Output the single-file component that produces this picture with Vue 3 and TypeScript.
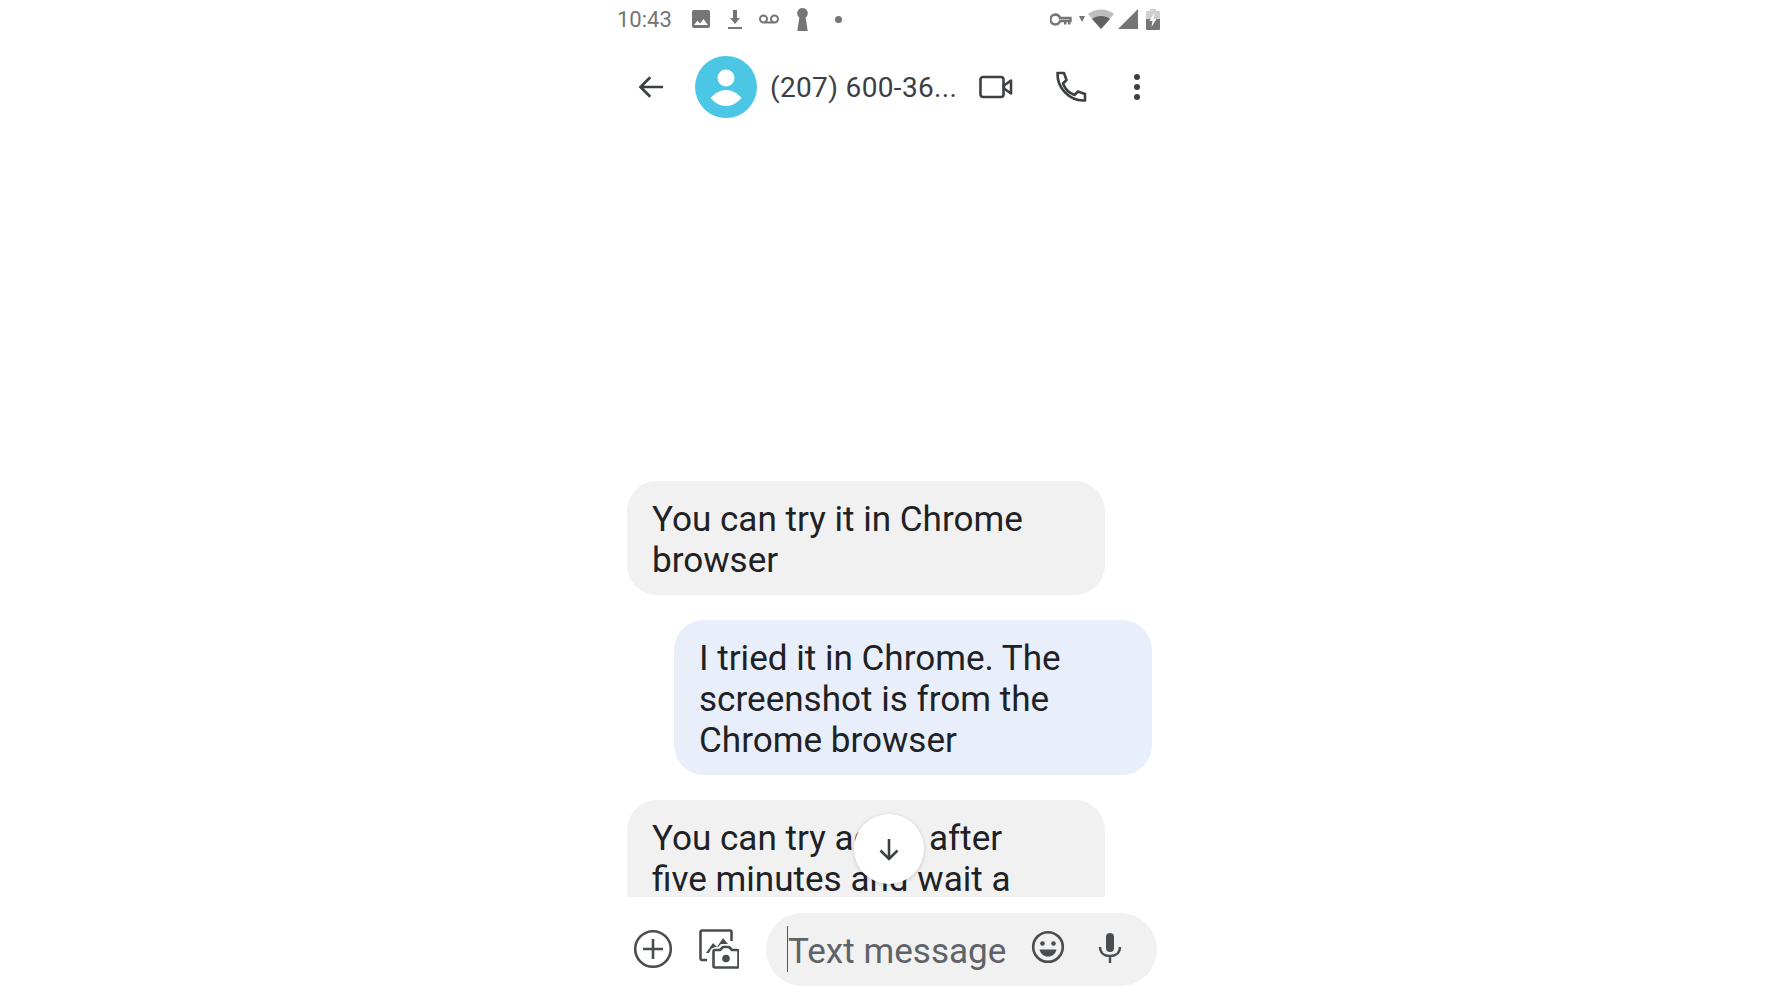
<script setup lang="ts">
interface Message { id: number; side: 'in' | 'out'; lines: string[] }
const messages: Message[] = [
  { id: 1, side: 'in', lines: ['You can try it in Chrome', 'browser'] },
  { id: 2, side: 'out', lines: ['I tried it in Chrome. The', 'screenshot is from the', 'Chrome browser'] },
  { id: 3, side: 'in', lines: ['You can try again after', 'five minutes and wait a'] },
]
</script>

<template>
  <div class="page">
    <div class="phone">
      <div class="status">
        <span class="time">10:43</span>
        <svg class="s1" width="24" height="24" viewBox="0 0 24 24"><path fill="#757575" d="M21 19V5a2 2 0 0 0-2-2H5a2 2 0 0 0-2 2v14a2 2 0 0 0 2 2h14a2 2 0 0 0 2-2zM8.500 13.500l2.500 3 3.500-4.500 4.500 6H5l3.500-4.500z"/></svg>
        <svg class="s2" width="24" height="26" viewBox="0 0 24 24"><path fill="#757575" d="M17 11h-3V3h-4v8H7l5 6 5-6zM5 20v2h14v-2H5z"/></svg>
        <svg class="s3" width="26" height="24" viewBox="0 0 24 24"><path fill="none" stroke="#757575" stroke-width="2" d="M6.500 8.500a3.500 3.500 0 1 0 0 7h11a3.500 3.500 0 1 0 0-7 3.500 3.500 0 0 0 0 7M6.500 8.500a3.500 3.500 0 0 1 0 7"/></svg>
        <svg class="s4" width="17" height="23" viewBox="0 0 16 22"><path fill="#757575" d="M8 0a5 5 0 0 1 3 9l2 13H3L5 9A5 5 0 0 1 8 0z"/></svg>
        <span class="dot"></span>
        <span class="grow"></span>
        <svg class="r1" width="22" height="15" viewBox="0 0 22 14"><path fill="none" stroke="#757575" stroke-width="2.400" d="M5.500 2a5 5 0 0 0 0 10A5 5 0 0 0 10 8.500h10.500V5.500H10A5 5 0 0 0 5.500 2z"/><path fill="#757575" d="M14 8h2.500v4H14zM18 8h2.500v4H18z"/></svg>
        <svg class="r2" width="8" height="8" viewBox="0 0 8 8"><path fill="#757575" d="M1 1h6L4 7z"/></svg>
        <svg class="r3" width="26" height="20" viewBox="0 0 26 20"><path fill="#bdbdbd" d="M0 5C7-1 19-1 26 5l-13 15z"/><path fill="#616161" d="M4 10c5-4 13-4 18 0l-9 10z"/></svg>
        <svg class="r4" width="20" height="20" viewBox="0 0 20 20"><path fill="#757575" d="M20 0v20H0z"/></svg>
        <svg class="r5" width="14" height="21" viewBox="0 0 14 21"><path fill="#cfcfcf" d="M4 2V0h6v2h3a1 1 0 0 1 1 1v17a1 1 0 0 1-1 1H1a1 1 0 0 1-1-1V3a1 1 0 0 1 1-1z"/><path fill="#757575" d="M0 10h14v10a1 1 0 0 1-1 1H1a1 1 0 0 1-1-1z"/><path fill="#fff" d="M8.500 4L3.500 12h3l-1 6 5-8h-3z"/></svg>
      </div>

      <header class="toolbar">
        <svg class="back" width="36" height="36" viewBox="0 0 24 24"><path fill="none" stroke="#3c4043" stroke-width="1.800" d="M20 12H5M11.500 5.500L5 12l6.500 6.500"/></svg>
        <div class="avatar">
          <svg width="62" height="62" viewBox="0 0 62 62"><circle cx="31" cy="22" r="8.500" fill="#fff"/><path fill="#fff" d="M15.500 42C20 37 25 34 31 34S42 37 46.500 42C42 47 37 50 31 50S20 47 15.500 42z"/></svg>
        </div>
        <span class="number">(207) 600-36...</span>
        <svg class="video" width="34" height="24" viewBox="0 0 34 24"><rect x="1.500" y="2" width="23" height="20" rx="2.500" fill="none" stroke="#3c4043" stroke-width="2.600"/><path fill="none" stroke="#3c4043" stroke-width="2.600" stroke-linejoin="round" d="M25 10.500L32 5.500v13l-7-5z"/></svg>
        <svg class="call" width="32" height="32" viewBox="0 0 32 32"><path fill="none" stroke="#3c4043" stroke-width="2.600" stroke-linejoin="round" d="M2.500 2h6.500l2.500 7-3.500 3.500C10 18 14 22 19.500 24l3.500-3.500 7 2.500v6.500c-15 1-28-12-27.500-27.500z"/></svg>
        <svg class="more" width="10" height="28" viewBox="0 0 10 28"><circle cx="5" cy="4" r="3" fill="#3c4043"/><circle cx="5" cy="14" r="3" fill="#3c4043"/><circle cx="5" cy="24" r="3" fill="#3c4043"/></svg>
      </header>

      <main class="thread">
        <div v-for="m in messages" :key="m.id" class="bubble" :class="m.side">
          <div v-for="line in m.lines" :key="line">{{ line }}</div>
        </div>
        <button class="scroll-down" type="button" aria-label="Scroll to bottom">
          <svg width="26" height="26" viewBox="0 0 26 26"><path fill="none" stroke="#3c4043" stroke-width="2.600" d="M13 3v20M4.500 14.500L13 23l8.500-8.500"/></svg>
        </button>
      </main>

      <footer class="composer">
        <svg class="plus" width="40" height="40" viewBox="0 0 40 40"><circle cx="20" cy="20" r="17.800" fill="none" stroke="#4a4d50" stroke-width="2.600"/><path fill="none" stroke="#4a4d50" stroke-width="2.600" d="M20 10v20M10 20h20"/></svg>
        <svg class="gallery" width="40" height="40" viewBox="0 0 40 40">
          <path fill="none" stroke="#4a4d50" stroke-width="2.600" d="M8 31H3a1.500 1.500 0 0 1-1.500-1.500V3A1.500 1.500 0 0 1 3 1.500h28A1.500 1.500 0 0 1 32.500 3v9"/>
          <path fill="#4a4d50" d="M7 24l7-10 4 4 6-9 5 6h-7l-3 3h-3l-4 2-2 4z"/>
          <path fill="none" stroke="#4a4d50" stroke-width="2.600" stroke-linejoin="round" d="M16 38.500a1.500 1.500 0 0 1-1.500-1.500V22.500A1.500 1.500 0 0 1 16 21h5l3-3h6l3 3h5a1.500 1.500 0 0 1 1.500 1.500V37a1.500 1.500 0 0 1-1.500 1.500z"/>
          <circle cx="27" cy="29.500" r="3.800" fill="#4a4d50"/>
        </svg>
        <div class="input">
          <span class="caret"></span>
          <span class="placeholder">Text message</span>
          <svg class="emoji" width="34" height="34" viewBox="0 0 34 34"><circle cx="17" cy="17" r="14.800" fill="none" stroke="#4a4d50" stroke-width="2.600"/><circle cx="11.500" cy="13.500" r="2.300" fill="#4a4d50"/><circle cx="22.500" cy="13.500" r="2.300" fill="#4a4d50"/><path fill="#4a4d50" d="M8.500 19.500h17c-1 4.500-4.500 7-8.500 7s-7.500-2.500-8.500-7z"/></svg>
          <svg class="mic" width="26" height="32" viewBox="0 0 26 32"><rect x="9" y="1" width="8" height="19" rx="4" fill="#4a4d50"/><path fill="none" stroke="#4a4d50" stroke-width="2.400" d="M3 15c0 6 4.500 9 10 9s10-3 10-9M13 24v7"/></svg>
        </div>
      </footer>
    </div>
  </div>
</template>

<style>
html, body { margin: 0; background: #fff; }
</style>

<style scoped>
.page {
  width: 1778px;
  height: 1000px;
  display: flex;
  justify-content: center;
  overflow: hidden;
  background: #fff;
  font-family: Roboto, "Noto Sans", sans-serif;
}
.phone {
  width: 556px;
  height: 1000px;
  display: flex;
  flex-direction: column;
}
.status {
  height: 38px;
  flex: none;
  display: flex;
  align-items: center;
  padding: 0 7px 0 6px;
  color: #757575;
}
.time { font-size: 22px; width: 58px; margin-right: 14px; white-space: nowrap; }
.s1 { margin-right: 10px; }
.s2 { margin-right: 9px; }
.s3 { margin-right: 12px; }
.dot { width: 7px; height: 7px; border-radius: 50%; background: #757575; margin-left: 24px; }
.grow { flex: 1; }
.r1 { margin-right: 6px; }
.r2 { margin-right: 2px; }
.r3 { margin-right: 4px; }
.r4 { margin-right: 8px; }
.toolbar {
  height: 98px;
  flex: none;
  display: flex;
  align-items: center;
  padding-left: 22px;
}
.back { margin-right: 26px; }
.avatar {
  width: 62px;
  height: 62px;
  border-radius: 50%;
  background: #4cc6e5;
  margin-right: 13px;
  flex: none;
}
.avatar svg { display: block; }
.number { font-size: 28px; color: #3c4043; width: 209px; white-space: nowrap; letter-spacing: 0.35px; }
.video { margin-right: 42px; }
.call { margin-right: 45px; }
.thread {
  position: relative;
  flex: 1;
  min-height: 0;
  display: flex;
  flex-direction: column;
  justify-content: flex-end;
  gap: 25px;
  overflow: hidden;
  padding: 0 15px 0 16px;
  margin-bottom: 8px;
}
.bubble {
  width: 478px;
  box-sizing: border-box;
  padding: 18px 25px 14px 25px;
  border-radius: 30px;
  font-size: 35.100px;
  line-height: 41px;
  color: #202124;
  flex: none;
}
.bubble.in { background: #f1f1f1; align-self: flex-start; }
.bubble.out { background: #e8effb; align-self: flex-end; }
.bubble:last-of-type {
  height: 122px;
  margin-bottom: -25px;
}
.scroll-down {
  position: absolute;
  left: 243px;
  top: 678px;
  width: 70px;
  height: 70px;
  padding: 0;
  border: none;
  border-radius: 50%;
  background: #fff;
  box-shadow: 0 1px 4px rgba(0, 0, 0, 0.18);
  display: flex;
  align-items: center;
  justify-content: center;
}
.composer {
  height: 88px;
  flex: none;
  display: flex;
  align-items: center;
  padding-left: 22px;
  margin-bottom: 7px;
}
.plus { margin-right: 26px; }
.gallery { margin-right: 27px; }
.input {
  width: 391px;
  height: 73px;
  border-radius: 37px;
  background: #f1f1f1;
  display: flex;
  align-items: center;
  position: relative;
  padding-left: 21px;
  box-sizing: border-box;
  flex: none;
}
.caret { width: 1px; height: 46px; background: #555; flex: none; }
.placeholder { font-size: 35.100px; color: #5f6368; width: 243px; padding-top: 4px; white-space: nowrap; flex: none; }
.emoji { margin-right: 32px; margin-top: -4px; }
.mic { margin-top: -3px; }
</style>
